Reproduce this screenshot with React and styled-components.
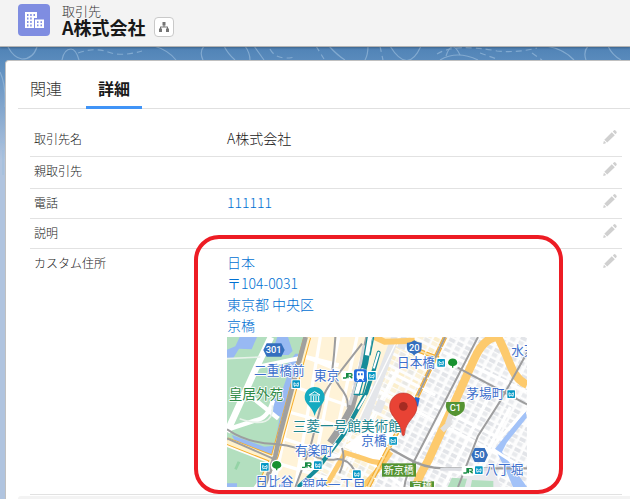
import { useState } from "react";
import styled, { createGlobalStyle } from "styled-components";

const GlobalStyle = createGlobalStyle`
  * {
    box-sizing: border-box;
  }

  body {
    margin: 0;
    color: #181818;
    font-family: "Noto Sans CJK JP", "Noto Sans", sans-serif;
    font-size: 14px;
    font-weight: 300;
    line-height: 21px;
  }
`;

const Page = styled.div`
  position: relative;
  display: flex;
  flex-direction: column;
  min-height: 100vh;
  overflow: hidden;
  background: linear-gradient(#4f82b5 46px, #5b8cbd 62px, #b0c4df 160px);
`;

const Contours = styled.svg`
  position: absolute;
  top: 0;
  left: 0;
  width: 100%;
  fill: none;
  stroke: #9bbddd;
  stroke-width: 1.2;
  opacity: 0.65;
`;

const Header = styled.header`
  position: relative;
  display: flex;
  align-items: flex-start;
  gap: 12px;
  height: 47px;
  padding: 4px 18px;
  background: #f3f3f3;
  border-bottom: 1px solid #b4b4b4;
  box-shadow: 0 1px 2px rgba(0, 0, 0, 0.25);
`;

const EntityIcon = styled.svg`
  flex: none;
  width: 32px;
  height: 32px;
  border-radius: 4px;
  background: #7f8de1;
`;

const EntityType = styled.div`
  font-size: 13px;
  line-height: 13px;
  color: #333;
`;

const TitleRow = styled.div`
  display: flex;
  align-items: center;
  gap: 8px;
`;

const Title = styled.h1`
  margin: 0;
  font-size: 18px;
  line-height: 20px;
  font-weight: 700;
`;

const HierarchyButton = styled.button`
  display: flex;
  align-items: center;
  justify-content: center;
  width: 20px;
  height: 20px;
  padding: 0;
  border: 1px solid #c9c9c9;
  border-radius: 4px;
  background: #fff;
`;

const Panel = styled.main`
  position: relative;
  display: flex;
  flex: 1;
  flex-direction: column;
  margin: 13px 0 0 5px;
  padding-left: 12px;
  background: #fff;
  border: 1px solid #c0c0c0;
  border-width: 1px 0 0 1px;
  border-top-left-radius: 4px;
`;

const TabList = styled.div`
  display: flex;
  gap: 12px;
  height: 48px;
  box-shadow: inset 0 -1px #e0e0e0;
`;

const Tab = styled.button`
  padding: 8px 12px 0;
  border: 0;
  border-bottom: 3px solid ${(props) => (props.$active ? "#4094f7" : "transparent")};
  background: none;
  color: ${(props) => (props.$active ? "#181818" : "#333")};
  font-family: inherit;
  font-size: 16px;
  font-weight: ${(props) => (props.$active ? 700 : 300)};
  cursor: pointer;
`;

const FieldList = styled.dl`
  margin: 16px 8px 1px 12px;
`;

const Field = styled.div`
  display: grid;
  grid-template-columns: 193px 1fr 24px;
  padding: 3px 0 ${(props) => props.$bottom || 5}px 4px;
  border-bottom: 1px solid #e2e2e2;
`;

const Label = styled.dt`
  font-size: 12px;
  color: #222;
`;

const Value = styled.dd`
  position: relative;
  margin: 0;
`;

const Link = styled.a`
  color: #0070d2;
  text-decoration: none;
`;

const AddressLink = styled(Link)`
  display: block;
  padding-bottom: 1px;
`;

const EditButton = styled.button`
  display: flex;
  align-items: flex-end;
  justify-content: flex-end;
  height: 16px;
  padding: 0 5px 0 0;
  border: 0;
  background: none;
  cursor: pointer;
`;

const Highlight = styled.div`
  position: absolute;
  top: -17px;
  bottom: -7px;
  left: -33px;
  width: 369px;
  border: 4px solid #ed1c24;
  border-radius: 25px;
  pointer-events: none;
`;

const Map = styled.svg`
  display: block;
  width: 300px;
  max-width: 100%;
  font-family: "Noto Sans CJK JP", sans-serif;
  font-weight: 400;
`;

const NextSection = styled.div`
  flex: 1;
  background: #f3f3f3;
  border-top-left-radius: 4px;
`;

const PlaceName = styled.text`
  font-size: ${(props) => props.$size || 38}px;
  fill: ${(props) => props.$color || "#3d6fcc"};
  stroke: #fff;
  stroke-width: 5px;
  stroke-linejoin: round;
  paint-order: stroke;
`;

const SignText = styled.text`
  font-family: Roboto, sans-serif;
  font-size: 28px;
  font-weight: 500;
  fill: #fff;
  text-anchor: middle;
`;

const fields = [
  { label: "取引先名", value: "A株式会社", bottom: 7 },
  { label: "親取引先", value: "", bottom: 7 },
  { label: "電話", value: <Link href="tel:111111">111111</Link> },
  { label: "説明", value: "" },
];

const addressLines = ["日本", "〒104-0031", "東京都 中央区", "京橋"];

const metroStops = [
  [196, 130],
  [423, 105],
  [631, 66],
  [841, 160],
  [487, 300],
  [102, 378],
  [261, 373],
  [378, 400],
  [744, 388],
];

const placeNames = [
  { x: 81, y: 115, name: "二重橋前" },
  { x: 261, y: 129, name: "東京" },
  { x: 510, y: 91, name: "日本橋" },
  { x: 853, y: 55, name: "水天宮前" },
  { x: 718, y: 184, name: "茅場町" },
  { x: 403, y: 325, name: "京橋" },
  { x: 204, y: 355, name: "有楽町" },
  { x: 85, y: 446, name: "日比谷" },
  { x: 226, y: 456, name: "銀座一丁目" },
  { x: 775, y: 411, name: "八丁堀" },
  { x: 5, y: 187, name: "皇居外苑", color: "#2f8a47", size: 41 },
  { x: 197, y: 281, name: "三菱一号館美術館", color: "#20868e", size: 41 },
];

function MetroMark({ x, y }) {
  return (
    <g transform={`translate(${x} ${y})`}>
      <rect x="-3" y="-3" width="29" height="29" fill="#fff" />
      <rect width="23" height="23" rx="2" fill="#0698c4" />
      <path d="M5 16V7l6.500 5L18 7v9zM7 18l-2 2M16 18l2 2" fill="none" stroke="#fff" strokeWidth="2.500" />
    </g>
  );
}

function JrMark({ x, y }) {
  return (
    <g transform={`translate(${x} ${y})`}>
      <rect x="-5" y="-6" width="38" height="30" rx="6" fill="#fff" />
      <path
        d="M11 0v11q0 4-3 4H0M28 16l-7-6h3q3 0 3-4t-3-4h-9v14"
        fill="none"
        stroke="#168a43"
        strokeWidth="4"
      />
    </g>
  );
}

function TreeMark({ x, y }) {
  return (
    <g transform={`translate(${x} ${y})`}>
      <circle r="18" cy="2" fill="#fff" />
      <path d="M-14 1c0-17 28-17 28 0 0 6-6 9-12 10v5h-4v-5c-6-1-12-4-12-10z" fill="#17912f" />
    </g>
  );
}

function AreaMap() {
  return (
    <Map viewBox="0 0 900 450" role="img" aria-label="京橋周辺の地図">
      <defs>
        <pattern id="blocks" width="27" height="34" patternUnits="userSpaceOnUse" patternTransform="rotate(27)">
          <rect width="27" height="34" fill="#fdfdfd" />
          <rect x="3" y="3" width="19" height="11" fill="#e2e4e8" />
          <rect x="3" y="18" width="16" height="12" fill="#e8eaed" />
        </pattern>
        <pattern id="shops" width="46" height="36" patternUnits="userSpaceOnUse" patternTransform="rotate(27)">
          <rect width="46" height="36" fill="#fdfdfd" />
          <rect x="3" y="3" width="18" height="12" fill="#fbeecb" />
          <rect x="24" y="3" width="18" height="12" fill="#fbf2da" />
          <rect x="3" y="18" width="18" height="12" fill="#fbf2da" />
          <rect x="24" y="18" width="18" height="12" fill="#e8e8e4" />
        </pattern>
      </defs>
      <rect width="900" height="450" fill="#fdfdfd" />
      <path d="M430 0h470v450H250z" fill="url(#blocks)" />
      <path d="M430 0h220L530 260 440 450H250z" fill="url(#shops)" />
      <path d="M440 0h55l-95 270-42-20z" fill="#fff4d9" />
      <path d="M240 0h175L330 320l-90 130h-95z" fill="#fff3d8" />
      <path d="M350 330l90-70 70 40-50 80z" fill="#fff" />

      {/* palace grounds and moat */}
      <path d="M0 0h240l-95 358L0 310z" fill="#b3dfbf" />
      <path d="M0 330l130 50-50 70H0z" fill="#b3dfbf" />
      <path d="M38 0h52L74 37 36 35 19 63 0 66V38l25-10zM151 0h32l14 42-12 12h-54zM205 50h19L192 180l-40 180-122-36-16-30 98 35 30-3 17-88-30-5 12-55 18 2 25-73-18-5z" fill="#98b9f3" />
      <path d="M155 450q18-28 40 0zM0 439h30v11H0z" fill="#98b9f3" />
      <path d="M132 0L85 98 0 285" fill="none" stroke="#fff" strokeWidth="20" />
      <path d="M90 90l145-30 100 25M74 180l80 65M10 275l75-25q38-5 53-60" fill="none" stroke="#fff" strokeWidth="13" />
      <path d="M0 65L100 60M38 245q105 35 98-40" fill="none" stroke="#e7f2e9" strokeWidth="5" />
      <path d="M22 395l10-22 8 3-11 23z" fill="#94d3a6" />

      {/* streets */}
      <g fill="none" stroke="#fff" strokeWidth="10">
        <path d="M225 55l205 85M205 150l170 60M185 225l165 45M170 305l170 55M155 380l150 45M280 0l-75 450M335 0l-85 450M390 0l-70 330" />
        <path d="M430 150l90 45 90 50 180 95 110 58M505 20l95 50M490 105l135 70M650 45l250 120M620 205l230 115M510 345l310 105M400 350l130 100" />
        <path d="M510 100L350 400M580 150L420 450M750 60L520 450M790 170L650 450M850 210L725 450" />
      </g>
      <g fill="none" stroke="#e4e6ea" strokeWidth="24">
        <path d="M505 0L410 255M465 190l-14 34M535 0l-14 35" />
      </g>
      <path d="M515 0L362 316" fill="none" stroke="#fff" strokeWidth="4" />
      <path d="M680 430l50-40 70 8 22 52H660z" fill="#e9e9ed" />
      <path d="M662 450l13-28 45 3-7 25zM735 429l64 3v18h-68z" fill="#b3dfbf" />
      <path d="M896 222l-92 113 32 63 22 52h42l-75-105 14-28 60-75z" fill="#a2c2f8" />
      <path d="M795 335l105 68M810 313l90-100M850 270l30-36" fill="none" stroke="#fff" strokeWidth="9" />

      {/* expressways */}
      <g fill="none" stroke="#fdca6d" strokeWidth="25">
        <path d="M566 450q8-30 38-80L740 70Q770 0 813 0q18 35 36 82t51 61" />
        <path d="M443 0l30 14 90-3" strokeWidth="18" />
        <path d="M295 450l60-103 55 18q38 15 60 10l22-30-25 37-60 68" strokeWidth="15" />
      </g>
      <path d="M645 280l26-25M682 205l-20 56" stroke="#e0e0e2" strokeWidth="16" />
      <path d="M241 0L144 355 100 450M0 312l143 56" fill="none" stroke="#f7ae2c" strokeWidth="23" />
      <path d="M241 0L144 355 100 450M0 312l143 56" fill="none" stroke="#fff2cc" strokeWidth="17" />
      <path d="M236 0L158 295l-13 62-35 93" fill="none" stroke="#a1a09e" strokeWidth="14" />
      <path d="M0 304l145 64" fill="none" stroke="#a1a09e" strokeWidth="6" />
      <path d="M654 0l-82 176-92 165-56 109M565 37l70 27" fill="none" stroke="#f5ae33" strokeWidth="13" strokeDasharray="30 4" />
      <path d="M654 0l-82 176-92 165-56 109M565 37l70 27" fill="none" stroke="#fbe1a4" strokeWidth="6" />
      <path d="M654 0l-82 176" fill="none" stroke="#9d9d9e" strokeWidth="6" />

      {/* railways */}
      <g fill="none" stroke="#9d9d9e" strokeWidth="6">
        <path d="M325 0q-4 62-8 88t23 64q26 30 22 60M405 20L335 110Q286 164 282 205L250 330l-45 120" />
        <path d="M0 277q62 42 145 44 70 5 125 40 30 12 62 5 32 0 51 35l15 49M345 333q12 35-8 76" />
        <path d="M753 0L560 375q-24 40-28 75M692 92l208 110M900 47l-80 145-67 105-60 153" />
        <path d="M490 335l50 28q47 30 112 31h248" strokeWidth="7" />
      </g>
      <path d="M425 0l-25 115-27 97-30 55-34 50" fill="none" stroke="#9f9fa0" strokeWidth="20" />
      <path d="M411 25l-17 92-26 87" fill="none" stroke="#d3d4d8" strokeWidth="9" />
      <path d="M640 397h150" stroke="#dcdee3" strokeWidth="9" />
      <path d="M428 0l-13 77-26 98" fill="none" stroke="#168c99" strokeWidth="18" />
      <path d="M429 0l-9 55M410 95l-22 78" stroke="#fff" strokeWidth="13" />
      <path d="M440 0l-11 55M380 172h27l14-52" fill="none" stroke="#168c99" strokeWidth="4" />
      <path d="M455 47l-14 50-23 70-28 52-40 73-80 105-53 50" fill="none" stroke="#168c99" strokeWidth="12" strokeLinecap="round" />
      <path d="M455 47l-14 45M416 177l-22 37M370 255l-20 34M326 320l-27 38" fill="none" stroke="#fff" strokeWidth="6" strokeLinecap="round" />

      {/* route shields */}
      <path d="M119 19h44l10 20-10 20h-44l-10-20z" fill="#346fbe" />
      <SignText x="140" y="49">301</SignText>
      <path d="M540 17q12 1 22-7 10 8 22 7 1 26-6 29-14 4-16 10-5-7-16-10-9-7-6-29z" fill="#346fbe" />
      <SignText x="562" y="41">20</SignText>
      <path d="M743 333h30l10 21-10 21h-30l-10-21z" fill="#346fbe" />
      <SignText x="757" y="364">50</SignText>
      <path d="M564 180l14 3-5 26-14-10z" fill="#2369d9" />
      <path d="M658 195h54q8 32-27 43-34-11-27-43z" fill="#549332" />
      <SignText x="685" y="223">C1</SignText>
      <rect x="465" y="379" width="102" height="40" fill="#549332" />
      <text x="470" y="410" fontSize="30" fill="#fff">新京橋</text>
      <rect x="549" y="433" width="72" height="20" fill="#549332" />
      <text x="555" y="460" fontSize="30" fill="#fff">京橋</text>

      {placeNames.map(({ x, y, name, color, size }) => (
        <PlaceName key={name} x={x} y={y} $color={color} $size={size}>
          {name}
        </PlaceName>
      ))}
      <JrMark x={348} y={108} />
      <JrMark x={225} y={376} />
      <JrMark x={709} y={393} />
      {metroStops.map(([x, y]) => (
        <MetroMark key={`${x}-${y}`} x={x} y={y} />
      ))}
      <TreeMark x={677} y={76} />
      <TreeMark x={149} y={384} />

      <rect x="381" y="97" width="38" height="38" rx="6" fill="#246ee0" />
      <path fillRule="evenodd" d="M393 103h14q4 0 4 4v15q0 4-4 4h-14q-4 0-4-4v-15q0-4 4-4zm0 6v6h5v-6zm9 0v6h5v-6zM393 126h4l-4 5h-5zm14 0h-4l4 5h5z" fill="#fff" />
      <path d="M263 150c17 0 30 13 30 31 0 22-22 25-30 56-8-31-30-34-30-56 0-18 13-31 30-31z" fill="#14aac0" />
      <path d="M247 174l16-10 16 10zM247 194h32M252 177v15M260 177v15M267 177v15M275 177v15" fill="none" stroke="#fff" strokeWidth="3" />
      <path d="M529 168c23 0 41 18 41 41 0 32-35 42-37 82q-1 5-4 5t-4-5c-2-40-37-50-37-82 0-23 18-41 41-41z" fill="#e84335" stroke="#be382d" strokeWidth="2" />
      <circle cx="529" cy="208" r="13" fill="#a52b22" />
    </Map>
  );
}

function PencilIcon() {
  return (
    <svg width="14" height="14" viewBox="0 0 14 14" fill="#d0d0d0" aria-hidden="true">
      <path d="M8.800 2.300l3 3L4.200 12.600 1.300 9.800zM9.800 1.400L10.800.5q.9-.8 1.700.1l.9.9q.7.800 0 1.700l-1 1zM.9 10.700l2.400 2.400-2.600.8q-.6 0-.4-.7z" />
    </svg>
  );
}

function EditField({ label }) {
  return (
    <EditButton type="button" aria-label={`${label} を編集`}>
      <PencilIcon />
    </EditButton>
  );
}

export default function App() {
  const [activeTab, setActiveTab] = useState("詳細");

  return (
    <>
      <GlobalStyle />
      <Page>
        <Contours viewBox="0 0 630 200" aria-hidden="true">
          <path d="M8 47q6 11 14 12 11 0 15-12M62 60q2-11 9-11 5 0 8 11M154 46q14 4 22 14M204 46q-5 6-1 14M224 46q4 8 11 14M245 46q5 7 5 14M254 46l10 14M329 46q8 9 16 14M368 46q0 9-3 14M390 46q18 29 31 0M440 60q17-10 38 0M446 56q6-18 14-1M546 46q18 3 28 14M588 46q-5 6-2 14M608 46q4 9 13 14M0 72q6 12 5 35M0 142l5 1M3 150v25" />
          <path d="M78 53q17-6 30-1t34-1M270 49q6 12 25 8M316 46l8 13M380 46l3 14M437 54q18-11 60-3 20 2 40-3M480 53l17 6M532 53l10 7" strokeDasharray="6 4" />
        </Contours>
        <Header>
          <EntityIcon viewBox="0 0 32 32" aria-hidden="true">
            <path
              fill="#fff"
              fillRule="evenodd"
              d="M7 8h12v6h-3v10H7zM9 10v2h1.500v-2zm3.200 0v2h1.500v-2zm3.300 0v2H17v-2zM9 13.500v2h1.500v-2zm3.200 0v2h1.500v-2zM9 17v2h1.500v-2zm3.200 0v2h1.500v-2zM9 20.500v2h1.500v-2zm3.200 0v2h1.500v-2zM17 15.500h9V24h-9zm2 1.800v1.700h1.500v-1.700zm3.500 0v1.700H24v-1.700zM19 20.500v1.700h1.500v-1.700zm3.500 0v1.700H24v-1.700z"
            />
          </EntityIcon>
          <div>
            <EntityType>取引先</EntityType>
            <TitleRow>
              <Title>A株式会社</Title>
              <HierarchyButton type="button" aria-label="階層の表示">
                <svg width="10" height="10" viewBox="0 0 10 10" fill="#747474" aria-hidden="true">
                  <path d="M3.500 0h3v3.500h-1v1h3q.5 0 .5.500v1.500h1V10H7V6.500h1V5.500H2v1h1V10H0V6.500h1V5q0-.5.500-.5h3v-1h-1z" />
                </svg>
              </HierarchyButton>
            </TitleRow>
          </div>
        </Header>
        <Panel>
          <TabList role="tablist">
            {["関連", "詳細"].map((tab) => (
              <Tab
                key={tab}
                type="button"
                role="tab"
                aria-selected={activeTab === tab}
                $active={activeTab === tab}
                onClick={() => setActiveTab(tab)}
              >
                {tab}
              </Tab>
            ))}
          </TabList>
          <FieldList>
            {fields.map(({ label, value, bottom }) => (
              <Field key={label} $bottom={bottom}>
                <Label>{label}</Label>
                <Value>{value}</Value>
                <EditField label={label} />
              </Field>
            ))}
            <Field $bottom={7}>
              <Label>カスタム住所</Label>
              <Value>
                <AddressLink href="#map">
                  {addressLines.map((line) => (
                    <div key={line}>{line}</div>
                  ))}
                </AddressLink>
                <AreaMap />
                <Highlight />
              </Value>
              <EditField label="カスタム住所" />
            </Field>
          </FieldList>
          <NextSection />
        </Panel>
      </Page>
    </>
  );
}
